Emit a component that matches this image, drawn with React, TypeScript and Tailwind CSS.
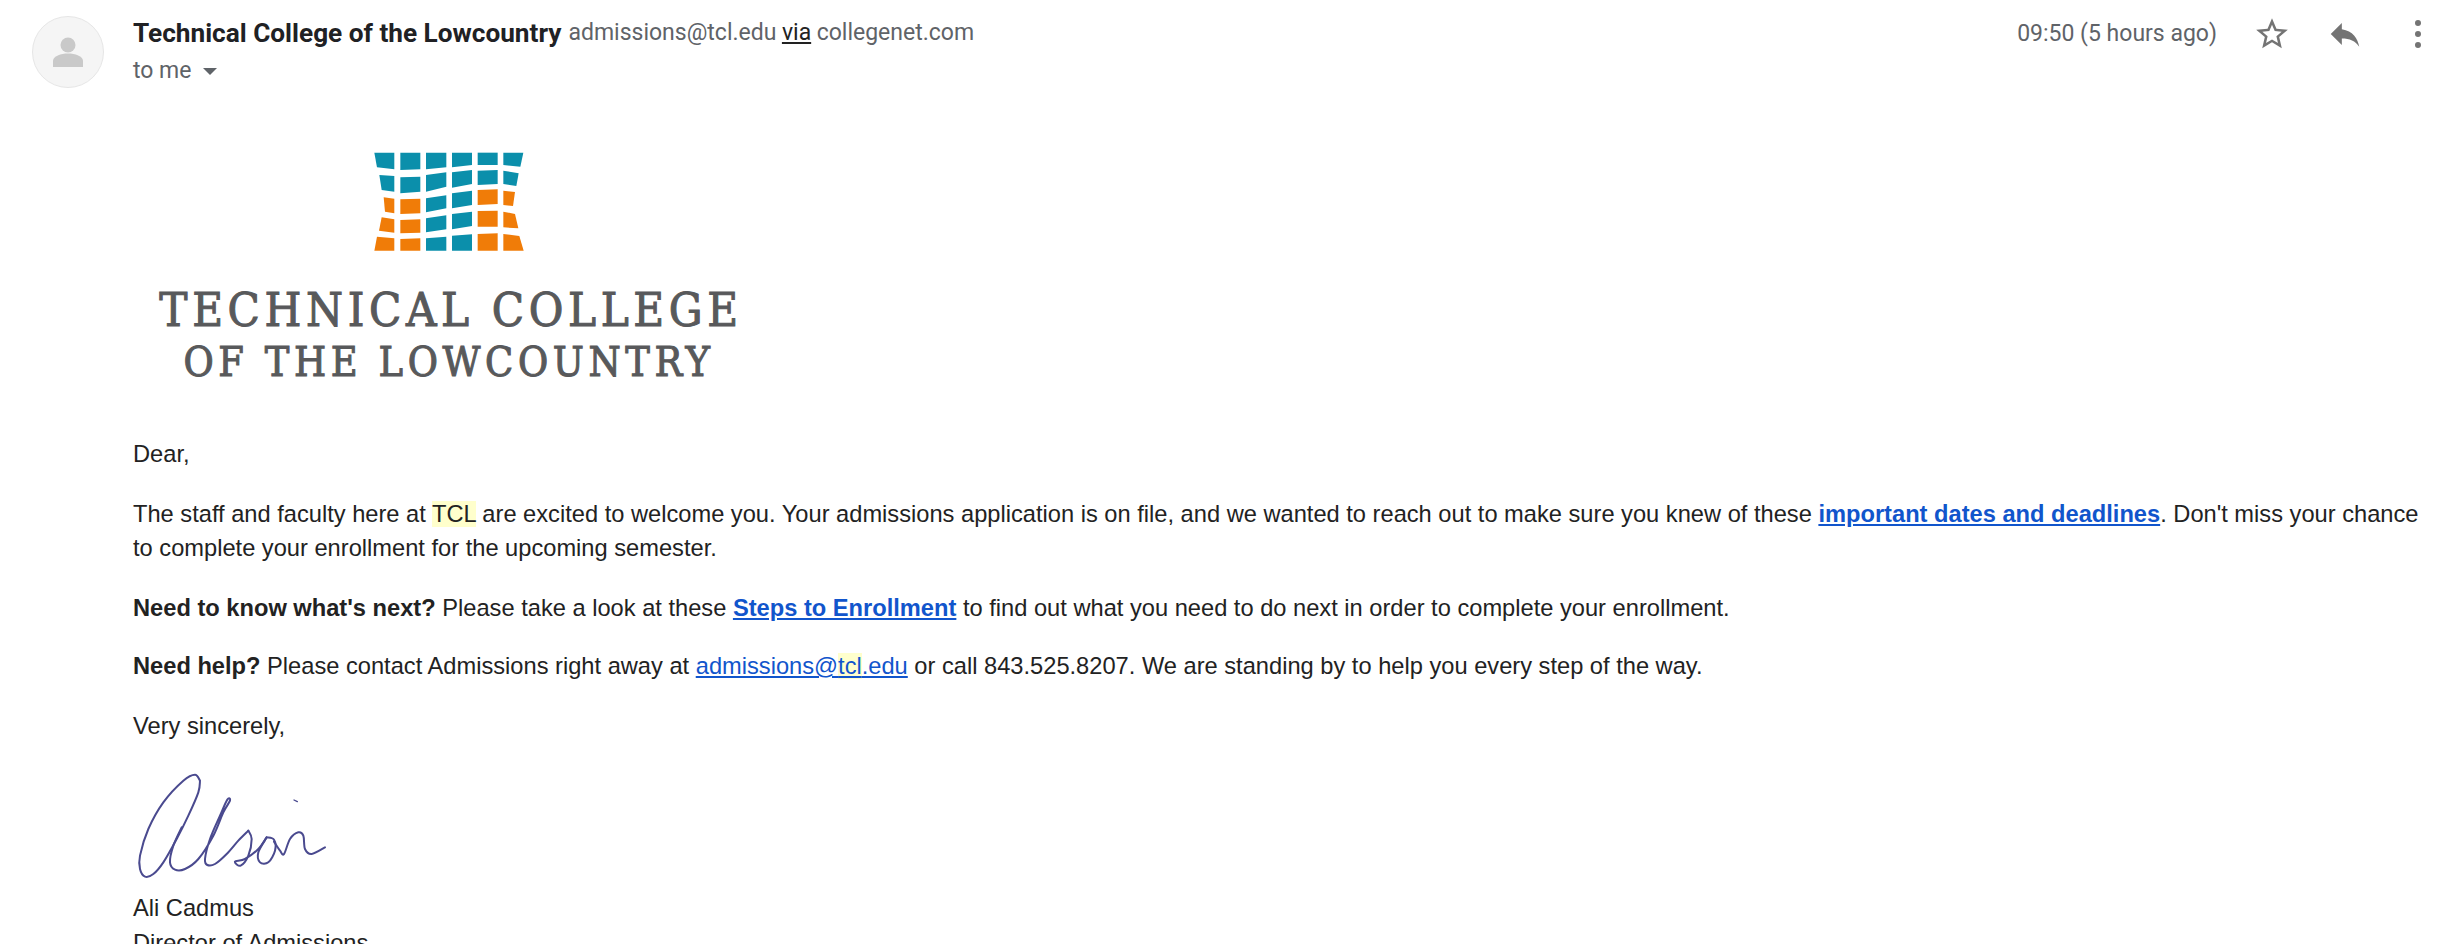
import { MoreVertical } from "lucide-react"

const BLUE = "#0b8fab"
const ORANGE = "#f07c08"

const tiles: [string, string][] = [
  [BLUE, "100,38 160,38 160,88 108,82"], [BLUE, "178,38 238,38 238,88 178,90"], [BLUE, "255,38 316,38 316,82 255,88"],
  [BLUE, "333,38 393,38 393,75 333,82"], [BLUE, "410,38 470,38 470,75 410,75"], [BLUE, "487,38 547,38 538,80 487,75"],
  [BLUE, "115,105 160,108 160,155 122,150"], [BLUE, "178,112 238,110 238,155 178,160"], [BLUE, "255,105 316,97 316,140 255,155"],
  [BLUE, "333,97 393,90 393,132 333,143"], [BLUE, "410,92 470,90 470,132 410,135"], [BLUE, "487,92 533,100 526,138 487,132"],
  [ORANGE, "128,172 160,176 160,220 132,215"], [ORANGE, "178,178 238,176 238,220 178,222"], [BLUE, "255,175 316,166 316,205 255,217"],
  [BLUE, "333,160 393,152 393,195 333,205"], [ORANGE, "410,150 470,148 470,192 410,195"], [ORANGE, "487,152 522,156 516,198 487,195"],
  [ORANGE, "122,232 160,238 160,278 114,272"], [ORANGE, "178,240 238,238 238,278 178,280"], [BLUE, "255,235 316,226 316,268 255,277"],
  [BLUE, "333,222 393,215 393,258 333,268"], [ORANGE, "410,213 470,212 470,260 410,260"], [ORANGE, "487,215 522,222 532,265 487,262"],
  [ORANGE, "108,290 160,295 160,332 100,332"], [ORANGE, "178,297 238,295 238,332 178,332"], [BLUE, "255,295 316,290 316,332 255,332"],
  [BLUE, "333,287 393,283 393,332 333,332"], [ORANGE, "410,282 470,280 470,332 410,332"], [ORANGE, "487,282 535,288 548,332 487,332"],
]

// signature strokes, traced point by point
const strokes: [number, number][][] = [
  [[240, 85], [225, 67], [190, 85], [130, 150], [85, 230], [60, 310], [60, 350], [75, 373], [100, 365], [130, 330], [170, 260], [205, 190], [235, 120], [240, 85]],
  [[185, 225], [160, 280], [150, 330], [165, 352], [195, 350], [235, 320], [280, 250], [310, 180], [330, 145], [322, 142], [300, 190], [270, 260], [255, 320], [262, 338], [285, 335], [320, 305], [355, 265], [385, 235]],
  [[385, 235], [395, 260], [385, 310], [362, 340], [345, 328], [375, 320], [415, 290], [440, 255]],
  [[440, 255], [415, 300], [420, 330], [445, 330], [465, 295], [462, 262], [440, 255]],
  [[462, 268], [480, 295], [492, 305], [510, 260], [535, 240], [550, 250], [555, 290], [575, 305], [615, 285]],
]

const smooth = (pts: [number, number][]) => {
  let d = `M${pts[0][0]} ${pts[0][1]}`
  for (let i = 0; i < pts.length - 1; i++) {
    const p0 = pts[Math.max(i - 1, 0)]
    const p1 = pts[i]
    const p2 = pts[i + 1]
    const p3 = pts[Math.min(i + 2, pts.length - 1)]
    d += `C${p1[0] + (p2[0] - p0[0]) / 6} ${p1[1] + (p2[1] - p0[1]) / 6} ${p2[0] - (p3[0] - p1[0]) / 6} ${p2[1] - (p3[1] - p1[1]) / 6} ${p2[0]} ${p2[1]}`
  }
  return d
}

const Highlight = ({ children }: { children: string }) => (
  <span className="bg-[#ffffcc]">{children}</span>
)

const App = () => {
  return (
    <div className="h-[944px] w-[2459px] overflow-hidden bg-white font-['Liberation_Sans',sans-serif] text-[23.67px] leading-[34.5px] text-[#222222]">
      <div className="flex pl-8 pr-[22px] pt-4">
        <div className="flex size-[72px] shrink-0 items-center justify-center rounded-full border border-[#e6e6e6] bg-[#f5f5f5]">
          <svg width="30" height="30" viewBox="0 0 30 30" fill="#c9c9c9">
            <ellipse cx="15" cy="8" rx="7.5" ry="7.5" />
            <path d="M0 30v-6c0-5 8-7.5 15-7.5s15 2.500 15 7.500v6z" />
          </svg>
        </div>
        <div className="ml-[29px] flex-1 font-['Roboto',sans-serif]">
          <div className="flex h-[34px] items-center text-[23px] text-[#5f6368]">
            <span className="text-[26.2px] font-bold text-[#202124]">Technical College of the Lowcountry</span>
            <span className="ml-[7px]">admissions@tcl.edu</span>
            <span className="ml-[5.5px] text-[#222222] underline">via</span>
            <span className="ml-[5.5px]">collegenet.com</span>
          </div>
          <div className="mt-[4px] flex h-[34px] items-center text-[23px] text-[#5f6368]">
            <span>to me</span>
            <span className="ml-[11px] h-0 w-0 border-x-[7px] border-t-[7px] border-x-transparent border-t-[#5f6368]" />
          </div>
        </div>
        <div className="flex h-[36px] items-center font-['Roboto',sans-serif] text-[23px] text-[#5f6368]">
          <span>09:50 (5 hours ago)</span>
          <svg className="ml-[36px]" width="38" height="38" viewBox="0 0 24 24" fill="#747474">
            <path d="M22 9.24l-7.19-.62L12 2 9.19 8.63 2 9.24l5.46 4.73L5.82 21 12 17.27 18.18 21l-1.63-7.03L22 9.24zM12 15.4l-3.76 2.27 1-4.28-3.32-2.88 4.38-.38L12 6.100l1.710 4.040 4.380.380-3.320 2.880 1 4.280L12 15.400z" />
          </svg>
          <svg className="ml-[35px]" width="38" height="38" viewBox="0 0 24 24" fill="#747474">
            <path d="M10 9V5l-7 7 7 7v-4.100c5 0 8.500 1.600 11 5.100-1-5-4-10-11-11z" />
          </svg>
          <MoreVertical className="ml-[35px] fill-[#747474] text-[#747474]" size={38} strokeWidth={1.8} />
        </div>
      </div>

      <div className="pl-[133px] pr-[26px]">
        <div className="ml-[21px] mt-[52px] flex w-[584px] flex-col items-center font-['DejaVu_Serif',serif] text-[#58595b]">
          <svg width="210" height="120" viewBox="0 0 630 360">
            {tiles.map(([fill, points]) => (
              <polygon key={points} fill={fill} points={points} />
            ))}
          </svg>
          <div className="ml-[10px] mt-[23px] whitespace-nowrap text-[47px] leading-[54px] tracking-[4.6px] [font-stretch:condensed] [-webkit-text-stroke:1px_#58595b]">TECHNICAL COLLEGE</div>
          <div className="ml-[6px] mt-[-2px] whitespace-nowrap text-[41px] leading-[54px] tracking-[4.6px] [font-stretch:condensed] [-webkit-text-stroke:1px_#58595b]">OF THE LOWCOUNTRY</div>
        </div>

        <p className="mt-[48px]">Dear,</p>
        <p className="mt-[25px]">
          The staff and faculty here at <Highlight>TCL</Highlight> are excited to welcome you. Your admissions application is on file, and we wanted to reach out to make sure you knew of these{" "}
          <a className="font-bold text-[#1155cc] underline">important dates and deadlines</a>. Don't miss your chance to complete your enrollment for the upcoming semester.
        </p>
        <p className="mt-[25px]">
          <b>Need to know what's next?</b> Please take a look at these{" "}
          <a className="font-bold text-[#1155cc] underline">Steps to Enrollment</a> to find out what you need to do next in order to complete your enrollment.
        </p>
        <p className="mt-[24px]">
          <b>Need help?</b> Please contact Admissions right away at{" "}
          <a className="text-[#1155cc] underline">admissions@<Highlight>tcl</Highlight>.edu</a> or call 843.525.8207. We are standing by to help you every step of the way.
        </p>
        <p className="mt-[25px]">Very sincerely,</p>

        <svg className="mt-[26px]" width="200" height="122" viewBox="39 50 600 366" fill="none" stroke="#4a4a8f" strokeWidth="6" strokeLinecap="round" strokeLinejoin="round">
          {strokes.map((pts, i) => (
            <path key={i} d={smooth(pts)} />
          ))}
          <path d="M522 143l10 5" strokeWidth="4" />
        </svg>
        <p>Ali Cadmus</p>
        <p>Director of Admissions</p>
      </div>
    </div>
  )
}

export default App
